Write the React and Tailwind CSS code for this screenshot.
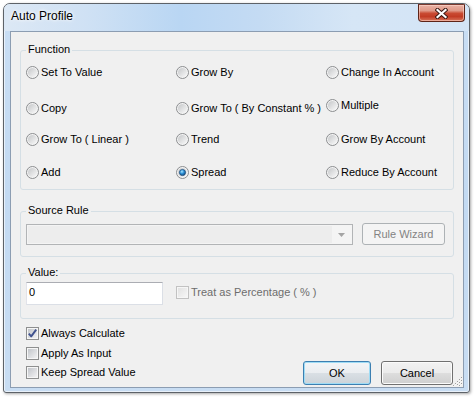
import React from "react";

function Radio({ checked }) {
  return (
    <svg width="13" height="13" viewBox="0 0 13 13" className="shrink-0 block">
      <defs>
        <linearGradient id="rg" x1="0" y1="0" x2="1" y2="1">
          <stop offset="0" stopColor="#c4c6c8" />
          <stop offset="1" stopColor="#fafafa" />
        </linearGradient>
        <radialGradient id="rb" cx="0.4" cy="0.35" r="0.75">
          <stop offset="0" stopColor="#a8e6ff" />
          <stop offset="0.45" stopColor="#2b8fd6" />
          <stop offset="1" stopColor="#0d3b6b" />
        </radialGradient>
      </defs>
      <circle cx="6.5" cy="6.5" r="6" fill="#f4f4f4" stroke="#8b8d8f" />
      <circle cx="6.5" cy="6.5" r="4.6" fill="url(#rg)" />
      {checked && (
        <circle cx="6.5" cy="6.5" r="3.1" fill="url(#rb)" stroke="#1a4775" strokeWidth="0.7" />
      )}
    </svg>
  );
}

function Check({ checked, disabled }) {
  return (
    <svg width="13" height="13" viewBox="0 0 13 13" className="shrink-0 block">
      <defs>
        <linearGradient id="cg" x1="0" y1="0" x2="1" y2="1">
          <stop offset="0" stopColor="#c2c5ca" />
          <stop offset="1" stopColor="#f2f2f3" />
        </linearGradient>
        <linearGradient id="cgd" x1="0" y1="0" x2="1" y2="1">
          <stop offset="0" stopColor="#e2e2e2" />
          <stop offset="1" stopColor="#f6f6f6" />
        </linearGradient>
      </defs>
      <rect x="0.5" y="0.5" width="12" height="12" fill="#f6f6f6" stroke={disabled ? "#c2c2c2" : "#8e8f8f"} />
      <rect x="2" y="2" width="9" height="9" fill={disabled ? "url(#cgd)" : "url(#cg)"} />
      {checked && (
        <path d="M2.8 6.6 L5.2 9.4 L10.2 2.6" fill="none" stroke="#40528e" strokeWidth="1.9" strokeLinejoin="round" />
      )}
    </svg>
  );
}

function RadioItem({ label, checked, extra = "" }) {
  return (
    <div className={`flex items-center gap-[2px] whitespace-nowrap ${extra}`}>
      <Radio checked={checked} />
      <span>{label}</span>
    </div>
  );
}

function CheckItem({ label, checked, disabled }) {
  return (
    <div className={`flex items-center gap-[2px] h-[13px] whitespace-nowrap ${disabled ? "text-[#6d6d6d]" : ""}`}>
      <Check checked={checked} disabled={disabled} />
      <span>{label}</span>
    </div>
  );
}

function Row({ children, extra = "" }) {
  return (
    <div className={`grid grid-cols-[150px_150px_150px] h-[13px] items-center ${extra}`}>
      {children}
    </div>
  );
}

export default function App() {
  return (
    <div className="w-[476px] h-[397px] bg-white pt-[3px] pl-[3px] font-['Liberation_Sans',Arial,sans-serif] text-[11px] leading-[13px] text-black">
      <div className="w-[467px] h-[390px] flex flex-col border border-[#5d6268] rounded-t-[7px] rounded-b-[3px] bg-[linear-gradient(180deg,#c9def4_0%,#c3daf2_50%,#c8ddf3_100%)] shadow-[1px_1px_3px_rgba(0,0,0,0.35),inset_0_0_0_1px_rgba(255,255,255,0.6)] overflow-hidden">
        {/* title bar */}
        <div className="h-[27px] shrink-0 flex items-start justify-between bg-[linear-gradient(90deg,#dce8f5_0%,#cfe1f4_18%,#b9d6f3_38%,#c4dbf3_55%,#d6e6f6_75%,#d3e4f6_100%)]">
          <div className="pl-[7px] pt-[5px] text-[12px] leading-[14px] [text-shadow:0_0_5px_#ffffff,0_0_3px_#ffffff]">
            Auto Profile
          </div>
          <div className="w-[47px] h-[18px] mr-[4px] flex items-center justify-center border border-[#5e2418] border-t-[#7a3a30] rounded-b-[4px] bg-[linear-gradient(180deg,#eab1a4_0%,#e09a89_35%,#c94b33_52%,#c23c25_72%,#d7745a_100%)] shadow-[inset_0_0_0_1px_rgba(255,220,210,0.55)]">
            <svg width="13" height="11" viewBox="0 0 13 11">
              <path d="M2.5 2 L10.5 9 M10.5 2 L2.5 9" stroke="#3c1a14" strokeWidth="4.2" strokeLinecap="square" />
              <path d="M2.5 2 L10.5 9 M10.5 2 L2.5 9" stroke="#ffffff" strokeWidth="2.2" strokeLinecap="square" />
            </svg>
          </div>
        </div>

        {/* client area */}
        <div className="relative ml-[6px] w-[454px] h-[357px] border border-[#8c9db2] bg-[#f0f0f0] pl-[9px] pt-[18px]">
          {/* Function group */}
          <div className="relative w-[434px] h-[140px] border border-[#d5dfe5] rounded-[3px] pl-[5px] pt-[15px]">
            <span className="absolute left-[5px] top-[-8px] px-[2px] bg-[#f0f0f0]">Function</span>
            <Row>
              <RadioItem label="Set To Value" />
              <RadioItem label="Grow By" />
              <RadioItem label="Change In Account" />
            </Row>
            <Row extra="mt-[20px]">
              <RadioItem label="Copy" />
              <RadioItem label="Grow To ( By Constant % )" />
              <RadioItem label="Multiple" extra="mb-[6px]" />
            </Row>
            <Row extra="mt-[21px]">
              <RadioItem label="Grow To ( Linear )" />
              <RadioItem label="Trend" />
              <RadioItem label="Grow By Account" />
            </Row>
            <Row extra="mt-[20px]">
              <RadioItem label="Add" />
              <RadioItem label="Spread" checked />
              <RadioItem label="Reduce By Account" />
            </Row>
          </div>

          {/* Source Rule group */}
          <div className="relative mt-[21px] w-[434px] h-[46px] border border-[#d5dfe5] rounded-[3px] pl-[5px] pt-[11px] flex items-start">
            <span className="absolute left-[5px] top-[-8px] px-[2px] bg-[#f0f0f0]">Source Rule</span>
            <div className="mt-[1px] w-[327px] h-[21px] border border-[#b2b4b6] bg-[#f4f4f4] flex p-[1px]">
              <div className="flex-1 bg-[#ededed]" />
              <div className="w-[19px] flex items-center justify-center">
                <svg width="7" height="4" viewBox="0 0 7 4">
                  <path d="M0 0 L7 0 L3.5 4 Z" fill="#a4a4a4" />
                </svg>
              </div>
            </div>
            <div className="ml-[9px] w-[83px] h-[22px] border border-[#adb2b5] rounded-[3px] bg-[#f4f4f4] text-[#838383] flex items-center justify-center">
              Rule Wizard
            </div>
          </div>

          {/* Value group */}
          <div className="relative mt-[16px] w-[434px] h-[46px] border border-[#d5dfe5] rounded-[3px] pl-[5px] pt-[8px] flex items-start">
            <span className="absolute left-[5px] top-[-8px] px-[2px] bg-[#f0f0f0]">Value:</span>
            <div className="w-[137px] h-[23px] bg-white border border-[#dbdfe6] border-t-[#abadb3] border-l-[#e2e3ea] pl-[2px] pt-[3px]">
              0
            </div>
            <div className="ml-[13px] mt-[4px]">
              <CheckItem label="Treat as Percentage ( % )" disabled />
            </div>
          </div>

          {/* Bottom area */}
          <div className="mt-[8px] w-[434px] flex items-start">
            <div className="ml-[6px] flex flex-col">
              <CheckItem label="Always Calculate" checked />
              <div className="mt-[7px]">
                <CheckItem label="Apply As Input" />
              </div>
              <div className="mt-[6px]">
                <CheckItem label="Keep Spread Value" />
              </div>
            </div>
            <div className="ml-auto mr-[1px] mt-[34px] flex gap-[10px]">
              <div className="w-[68px] h-[24px] rounded-[3px] border border-[#3c7fb1] bg-[linear-gradient(180deg,#f3f5f7_0%,#eaedf0_48%,#d9dfe4_52%,#ccd3d9_100%)] shadow-[inset_0_0_0_1px_#9fdcf5] flex items-center justify-center">
                OK
              </div>
              <div className="w-[72px] h-[24px] rounded-[3px] border border-[#707070] bg-[linear-gradient(180deg,#f2f2f2_0%,#ebebeb_48%,#dddddd_52%,#cfcfcf_100%)] shadow-[inset_0_0_0_1px_#fbfbfb] flex items-center justify-center">
                Cancel
              </div>
            </div>
          </div>

          {/* size grip */}
          <svg width="12" height="12" viewBox="0 0 12 12" className="absolute right-0 bottom-0">
            <path d="M11 2 L2 11 M11 5 L5 11 M11 8 L8 11" stroke="#ffffff" strokeWidth="1" strokeDasharray="1.4 1.4" transform="translate(0.7 0.7)" />
            <path d="M11 2 L2 11 M11 5 L5 11 M11 8 L8 11" stroke="#9a9a9a" strokeWidth="1" strokeDasharray="1.4 1.4" />
          </svg>
        </div>
      </div>
    </div>
  );
}
